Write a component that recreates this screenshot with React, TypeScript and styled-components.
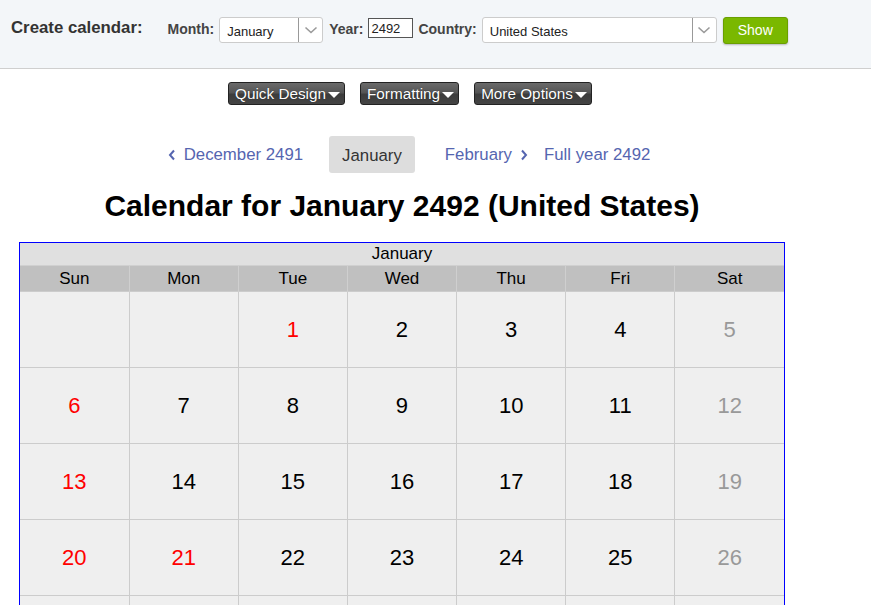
import * as React from 'react';
import styled, { createGlobalStyle } from 'styled-components';

const GlobalStyle = createGlobalStyle`
  body {
    margin: 0;
    background: #ffffff;
    font-family: 'Liberation Sans', Arial, sans-serif;
  }
`;

const days = ['Sun', 'Mon', 'Tue', 'Wed', 'Thu', 'Fri', 'Sat'];
// red = Sunday or holiday, grey = Saturday
const holidays = [1, 20, 21];
const firstWeekday = 2;
const daysInMonth = 31;

type Tone = 'normal' | 'red' | 'grey';

function toneOf(day: number, weekday: number): Tone {
  if (weekday === 0 || holidays.indexOf(day) >= 0) return 'red';
  if (weekday === 6) return 'grey';
  return 'normal';
}

function buildWeeks(): (number | null)[][] {
  const cells: (number | null)[] = [];
  for (let i = 0; i < firstWeekday; i++) cells.push(null);
  for (let d = 1; d <= daysInMonth; d++) cells.push(d);
  while (cells.length % 7) cells.push(null);
  const weeks: (number | null)[][] = [];
  for (let i = 0; i < cells.length; i += 7) weeks.push(cells.slice(i, i + 7));
  return weeks;
}

const Chevron = ({ dir }: { dir: 'left' | 'right' | 'down' }) => {
  if (dir === 'down') {
    return (
      <svg width="14" height="8" viewBox="0 0 14 8">
        <path d="M1.5 1.5 L7 6.5 L12.5 1.5" fill="none" stroke="#9a9a9a" strokeWidth="1.6" />
      </svg>
    );
  }
  return (
    <svg width="8" height="12" viewBox="0 0 8 12">
      <path
        d={dir === 'left' ? 'M6 1.5 L2 6 L6 10.5' : 'M2 1.5 L6 6 L2 10.5'}
        fill="none"
        stroke="#5565b0"
        strokeWidth="2"
      />
    </svg>
  );
};

export default function App() {
  const weeks = buildWeeks();
  return (
    <>
      <GlobalStyle />
      <TopBar>
        <BarTitle>Create calendar:</BarTitle>
        <FieldLabel>Month:</FieldLabel>
        <Select width={104}>
          <SelectText>January</SelectText>
          <SelectArrow>
            <Chevron dir="down" />
          </SelectArrow>
        </Select>
        <FieldLabel>Year:</FieldLabel>
        <YearInput>2492</YearInput>
        <FieldLabel>Country:</FieldLabel>
        <Select width={235}>
          <SelectText>United States</SelectText>
          <SelectArrow>
            <Chevron dir="down" />
          </SelectArrow>
        </Select>
        <ShowButton>Show</ShowButton>
      </TopBar>

      <Main>
        <ToolRow>
          <DarkButton>
            Quick Design<Caret />
          </DarkButton>
          <DarkButton>
            Formatting<Caret />
          </DarkButton>
          <DarkButton>
            More Options<Caret />
          </DarkButton>
        </ToolRow>

        <NavRow>
          <NavLink>
            <Chevron dir="left" />
            December 2491
          </NavLink>
          <CurrentMonth>January</CurrentMonth>
          <NavLink>
            February
            <Chevron dir="right" />
          </NavLink>
          <NavLink>Full year 2492</NavLink>
        </NavRow>

        <Heading>Calendar for January 2492 (United States)</Heading>

        <CalFrame>
          <CalTable>
            <thead>
              <tr>
                <MonthCell colSpan={7}>January</MonthCell>
              </tr>
              <tr>
                {days.map((d) => (
                  <DayHead key={d}>{d}</DayHead>
                ))}
              </tr>
            </thead>
            <tbody>
              {weeks.map((week, wi) => (
                <tr key={wi}>
                  {week.map((day, i) => (
                    <DayCell key={i} tone={day ? toneOf(day, i) : 'normal'}>
                      {day}
                    </DayCell>
                  ))}
                </tr>
              ))}
            </tbody>
          </CalTable>
        </CalFrame>
      </Main>
    </>
  );
}

const TopBar = styled.div`
  display: flex;
  align-items: center;
  height: 69px;
  box-sizing: border-box;
  padding: 0 0 8px 11px;
  background: #f3f6f9;
  border-bottom: 1px solid #cfcfcf;
`;

const BarTitle = styled.span`
  font-size: 16.8px;
  font-weight: bold;
  color: #333333;
  margin-right: 25px;
  margin-top: -4px;
`;

const FieldLabel = styled.span`
  font-size: 14px;
  font-weight: bold;
  color: #444444;
  margin: -3px 5px 0 0;
`;

const Select = styled.div<{ width: number }>`
  display: flex;
  align-items: stretch;
  width: ${(p) => p.width}px;
  height: 26px;
  box-sizing: border-box;
  background: #ffffff;
  border: 1px solid #cccccc;
  border-radius: 3px;
  margin-right: 6px;
`;

const SelectText = styled.span`
  flex: 1;
  font-size: 13px;
  color: #222222;
  padding: 6px 0 0 7px;
`;

const SelectArrow = styled.span`
  width: 23px;
  border-left: 1px solid #999999;
  display: flex;
  align-items: center;
  justify-content: center;
`;

const YearInput = styled.span`
  width: 45px;
  height: 20px;
  box-sizing: border-box;
  border: 1px solid #555555;
  background: #ffffff;
  font-size: 13px;
  color: #222222;
  padding: 2px 0 0 2px;
  margin: -4px 5px 0 0;
`;

const ShowButton = styled.div`
  width: 65px;
  height: 27px;
  box-sizing: border-box;
  display: flex;
  align-items: center;
  justify-content: center;
  background: #7ab800;
  border: 1px solid #6a9f00;
  border-radius: 3px;
  box-shadow: 0 1px 2px rgba(0, 0, 0, 0.25);
  color: #ffffff;
  font-size: 14px;
`;

const Main = styled.div`
  width: 766px;
  margin-left: 19px;
`;

const ToolRow = styled.div`
  display: flex;
  justify-content: center;
  gap: 15px;
  padding-left: 16px;
  margin-top: 13px;
`;

const DarkButton = styled.div`
  display: flex;
  align-items: center;
  height: 23px;
  box-sizing: border-box;
  padding: 0 4px 0 6px;
  border: 1px solid #222222;
  border-radius: 3px;
  background: linear-gradient(#6a6a6a 0%, #555555 45%, #3c3c3c 55%, #444444 100%);
  color: #ffffff;
  font-size: 15.3px;
  text-shadow: 0 0 1px rgba(0, 0, 0, 0.6);
`;

const Caret = styled.span`
  width: 0;
  height: 0;
  margin: 2px 0 0 2px;
  border-left: 6px solid transparent;
  border-right: 6px solid transparent;
  border-top: 6px solid #ffffff;
`;

const NavRow = styled.div`
  display: flex;
  justify-content: center;
  align-items: center;
  padding-left: 14px;
  margin-top: 31px;
  font-size: 16.8px;
`;

const NavLink = styled.span`
  display: flex;
  align-items: center;
  gap: 8px;
  color: #5565b0;
  margin: 0 16px 0 0;

  &:first-child {
    margin-right: 26px;
  }

  &:last-child {
    margin-right: 0;
  }
`;

const CurrentMonth = styled.span`
  height: 37px;
  box-sizing: border-box;
  padding: 10px 13px 0;
  background: #dddddd;
  border-radius: 3px;
  color: #333333;
  margin-right: 30px;
`;

const Heading = styled.h1`
  margin: 16px 0 19px;
  text-align: center;
  font-size: 30px;
  font-weight: bold;
  color: #000000;
  line-height: 34px;
`;

const CalFrame = styled.div`
  border: 1px solid #0000ff;
`;

const CalTable = styled.table`
  width: 100%;
  table-layout: fixed;
  border-collapse: collapse;
  border-style: hidden;
`;

const MonthCell = styled.th`
  height: 22px;
  padding: 0;
  background: #e0e0e0;
  font-size: 17px;
  font-weight: normal;
  color: #000000;
  line-height: 22px;
  border-bottom: 1px solid #d0d0d0;
`;

const DayHead = styled.th`
  height: 25px;
  padding: 0;
  background: #c0c0c0;
  font-size: 17px;
  font-weight: normal;
  color: #000000;
  border-left: 1px solid #cfcfcf;
`;

const toneColors: Record<Tone, string> = {
  normal: '#000000',
  red: '#ff0000',
  grey: '#999999',
};

const DayCell = styled.td<{ tone: Tone }>`
  height: 75px;
  padding: 0;
  background: #efefef;
  border: 1px solid #cccccc;
  text-align: center;
  vertical-align: middle;
  font-size: 22px;
  color: ${(p) => toneColors[p.tone]};
`;
